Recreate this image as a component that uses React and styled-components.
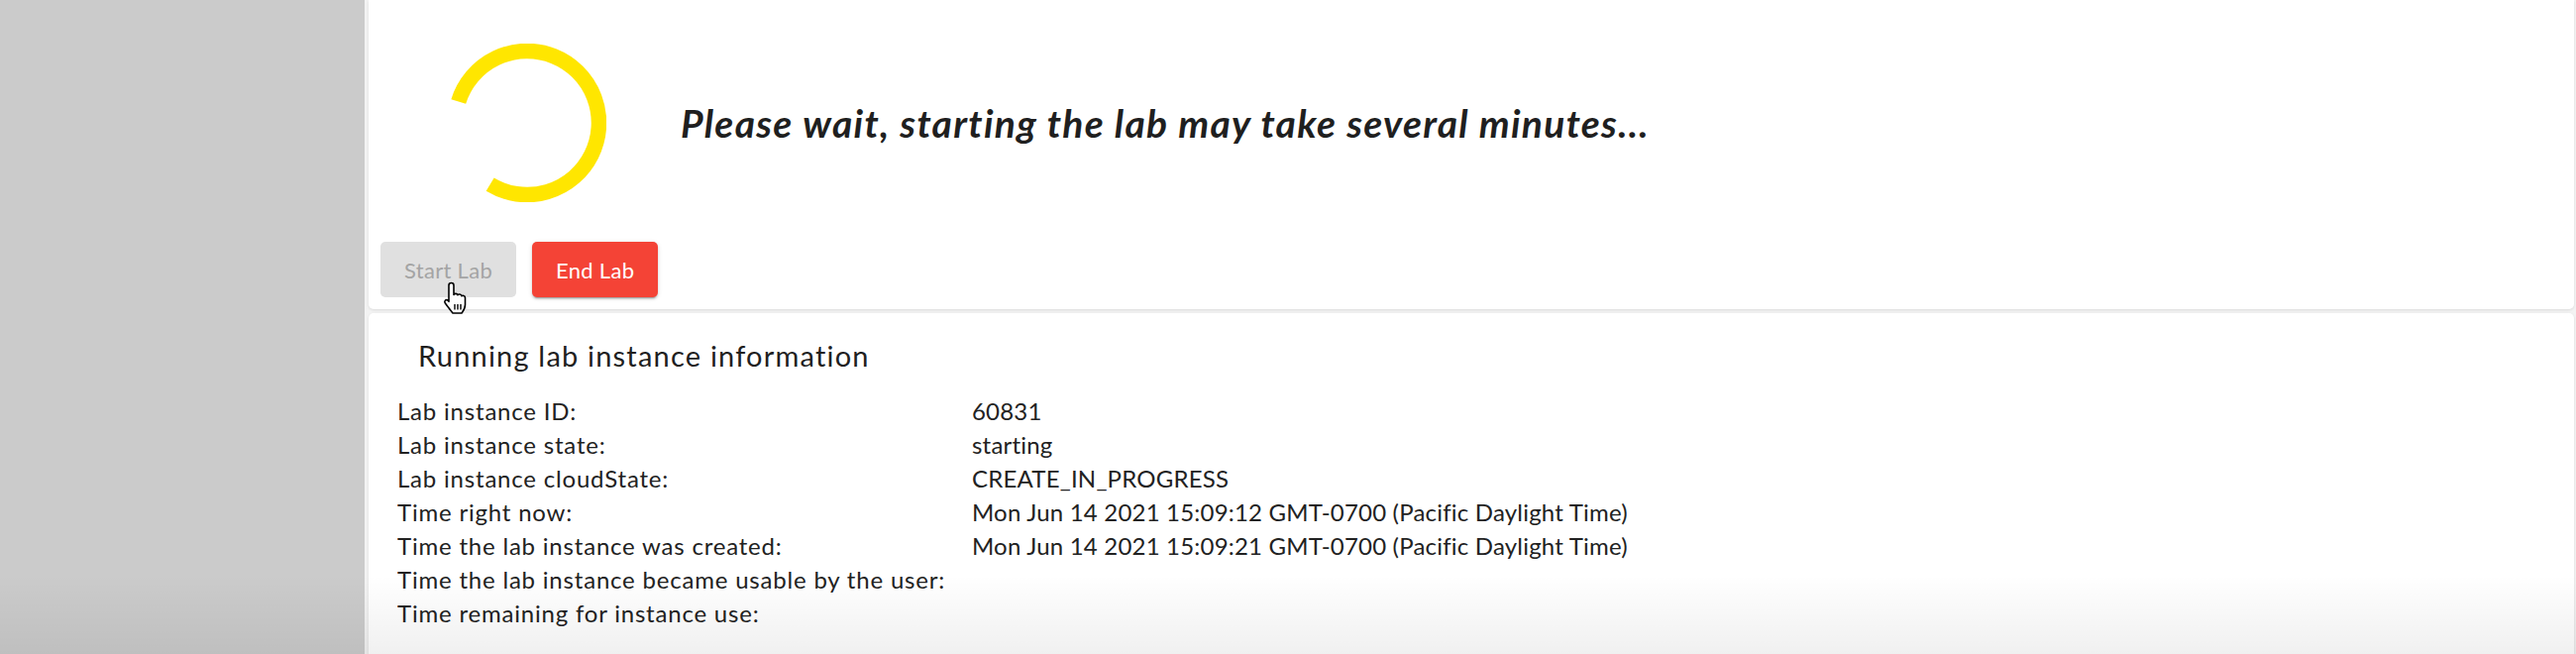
import React from 'react';
import styled, { createGlobalStyle } from 'styled-components';

const GlobalStyle = createGlobalStyle`
  html, body {
    margin: 0;
    padding: 0;
    background: #cbcbcb;
  }
  body {
    font-family: Lato, "Noto Sans", Arial, sans-serif;
    color: #222222;
  }
`;

const Page = styled.div`
  position: relative;
  display: flex;
  width: 2600px;
  height: 660px;
  overflow: hidden;
`;

const Sidebar = styled.aside`
  width: 368px;
  flex-shrink: 0;
  background: #cbcbcb;
`;

const Main = styled.main`
  flex: 1;
  display: flex;
  flex-direction: column;
  gap: 4px;
  padding: 0 2px 0 4px;
  background: #f3f3f3;
`;

const Card = styled.section`
  background: #ffffff;
  border-radius: ${(p) => (p.$top ? '0 0 5px 5px' : '5px 5px 0 0')};
  box-shadow: 0 1px 3px rgba(0, 0, 0, 0.1);
  flex-shrink: 0;
`;

const LaunchCard = styled(Card)`
  padding: 0 12px 12px;
`;

const StatusRow = styled.div`
  display: flex;
  align-items: center;
  gap: 75px;
  padding: 44px 0 0 68px;
`;

const Spinner = styled.svg`
  width: 160px;
  height: 160px;
  flex-shrink: 0;
`;

const WaitText = styled.h2`
  margin: 0;
  font-size: 39px;
  font-weight: 700;
  font-style: italic;
  color: #1f1f1f;
  letter-spacing: 1.3px;
`;

const Actions = styled.div`
  display: flex;
  gap: 16px;
  margin-top: 40px;
`;

const ButtonWrap = styled.div`
  position: relative;
`;

const Button = styled.button`
  height: 56px;
  padding: 0 24px;
  border: none;
  border-radius: 5px;
  font-family: inherit;
  font-size: 22px;
  letter-spacing: 0.3px;
  background: ${(p) => (p.$danger ? '#f44336' : '#e0e0e0')};
  color: ${(p) => (p.$danger ? '#ffffff' : '#a4a4a4')};
  box-shadow: ${(p) =>
    p.$danger
      ? '0 2px 2px rgba(0,0,0,0.14), 0 3px 1px -2px rgba(0,0,0,0.2), 0 1px 5px rgba(0,0,0,0.12)'
      : 'none'};
`;

const Cursor = styled.svg`
  position: absolute;
  left: 61px;
  top: 40px;
  width: 32px;
  height: 35px;
  pointer-events: none;
`;

const InfoCard = styled(Card)`
  flex: 1;
  padding: 26px 28px 0 29px;
`;

const InfoTitle = styled.h3`
  margin: 0 0 22px 21px;
  font-size: 29px;
  line-height: 34px;
  font-weight: 400;
  letter-spacing: 1.2px;
  color: #1f1f1f;
`;

const InfoGrid = styled.dl`
  display: grid;
  grid-template-columns: 580px 1fr;
  margin: 0;
  font-size: 24px;
  line-height: 34px;
`;

const Label = styled.dt`
  margin: 0;
  letter-spacing: 0.8px;
`;

const Value = styled.dd`
  margin: 0;
  letter-spacing: 0.2px;
`;

const BottomShade = styled.div`
  position: absolute;
  left: 0;
  right: 0;
  bottom: 0;
  height: 80px;
  background: linear-gradient(to bottom, rgba(0, 0, 0, 0), rgba(0, 0, 0, 0.06));
  pointer-events: none;
`;

const rows = [
  ['Lab instance ID:', '60831'],
  ['Lab instance state:', 'starting'],
  ['Lab instance cloudState:', 'CREATE_IN_PROGRESS'],
  ['Time right now:', 'Mon Jun 14 2021 15:09:12 GMT-0700 (Pacific Daylight Time)'],
  ['Time the lab instance was created:', 'Mon Jun 14 2021 15:09:21 GMT-0700 (Pacific Daylight Time)'],
  ['Time the lab instance became usable by the user:', ''],
  ['Time remaining for instance use:', ''],
];

const App = () => (
  <>
    <GlobalStyle />
    <Page>
      <Sidebar />
      <Main>
        <LaunchCard $top>
          <StatusRow>
            <Spinner viewBox="0 0 160 160">
              <path
                d="M10.78 58.44 A72.5 72.5 0 1 1 42.66 142.14"
                fill="none"
                stroke="#ffe600"
                strokeWidth="15.5"
              />
            </Spinner>
            <WaitText>Please wait, starting the lab may take several minutes...</WaitText>
          </StatusRow>
          <Actions>
            <ButtonWrap>
              <Button disabled>Start Lab</Button>
              <Cursor viewBox="0 0 32 35">
                <path
                  d="M10.5 1.5 C12 1.5 13 2.5 13 4 V13.5 C13.5 12 16.5 12 17 13.8 C17.5 12.6 20.5 12.6 21 14.8 C21.6 13.8 24.5 14.2 24.5 16.5 V23.5 C24.5 27.5 22.5 30 21 32 H12 C10.5 30 7 25.5 4.2 21.8 C3.2 20.2 4.6 18 6.6 18.8 L8 20.3 V4 C8 2.5 9 1.5 10.5 1.5 Z"
                  fill="#ffffff"
                  stroke="#000000"
                  strokeWidth="1.6"
                  strokeLinejoin="round"
                />
                <path d="M14 23 V28.5 M17 23 V28.5 M20 23 V28.5" stroke="#000000" strokeWidth="1.4" />
              </Cursor>
            </ButtonWrap>
            <Button $danger>End Lab</Button>
          </Actions>
        </LaunchCard>
        <InfoCard>
          <InfoTitle>Running lab instance information</InfoTitle>
          <InfoGrid>
            {rows.map(([label, value]) => (
              <React.Fragment key={label}>
                <Label>{label}</Label>
                <Value>{value}</Value>
              </React.Fragment>
            ))}
          </InfoGrid>
        </InfoCard>
      </Main>
      <BottomShade />
    </Page>
  </>
);

export default App;
